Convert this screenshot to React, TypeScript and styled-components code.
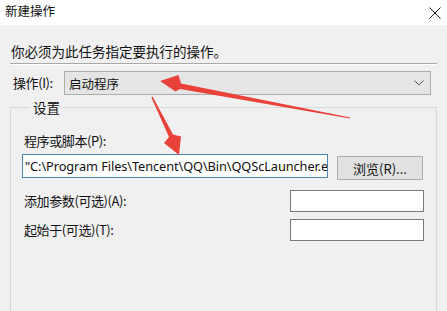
import React from "react";
import styled, { createGlobalStyle } from "styled-components";

const Global = createGlobalStyle`
  html, body { margin: 0; padding: 0; background: #f0f0f0; }
  body { font-family: "Noto Sans CJK SC", "Noto Sans", sans-serif; }
`;

const Window = styled.div`
  position: relative;
  width: 447px;
  height: 311px;
  overflow: hidden;
  background: #f0f0f0;
  display: flex;
  flex-direction: column;
  color: #111111;
`;

const TitleBar = styled.div`
  height: 25px;
  flex: none;
  background: #ffffff;
  display: flex;
  align-items: center;
  justify-content: space-between;
  padding: 0 5px 0 5px;
  font-size: 12.5px;
  line-height: 1;
`;

const Title = styled.span`
  margin-top: -2px;
`;

const Content = styled.div`
  display: flex;
  flex-direction: column;
  padding: 0 10px;
  flex: 1;
`;

const Instruction = styled.div`
  font-size: 13.5px;
  line-height: 16px;
  margin-top: 18px;
  padding-left: 1px;
`;

const Separator = styled.div`
  margin-top: 4px;
  height: 0;
  border-top: 1px solid #a9a9a9;
  border-bottom: 1px solid #ffffff;
`;

const ActionRow = styled.div`
  display: flex;
  align-items: center;
  margin-top: 6px;
`;

const Label = styled.span`
  font-size: 13px;
  line-height: 16px;
  white-space: nowrap;
  letter-spacing: -0.4px;
`;

const ActionLabel = styled(Label)`
  width: 51px;
  padding-left: 3px;
  flex: none;
`;

const Combo = styled.div`
  flex: 1;
  margin-right: 6px;
  height: 24px;
  box-sizing: border-box;
  background: #e5e5e5;
  border: 1px solid #adadad;
  display: flex;
  align-items: center;
  justify-content: space-between;
  padding: 0 6px 0 4px;
  font-size: 12.5px;
`;

const Group = styled.fieldset`
  margin: 5px 0 0 0;
  padding: 12px 13px 0 13px;
  border: 1px solid #d9d9d9;
  border-bottom: none;
  flex: 1;
  min-width: 0;
  display: flex;
  flex-direction: column;
`;

const Legend = styled.legend`
  font-size: 13.5px;
  line-height: 14px;
  padding: 0 3px;
  margin-left: 6px;
`;

const FieldLabel = styled(Label)`
  display: block;
  margin-top: 7px;
`;

const PathRow = styled.div`
  display: flex;
  align-items: flex-start;
  margin-top: 5px;
  margin-left: -2px;
`;

const PathInput = styled.div`
  width: 306px;
  height: 24px;
  box-sizing: border-box;
  border: 1px solid #4d86b3;
  background: #ffffff;
  font-family: "Noto Sans", "Open Sans", sans-serif;
  font-size: 12.8px;
  line-height: 22px;
  padding-left: 2px;
  white-space: nowrap;
  overflow: hidden;
  letter-spacing: -0.1px;
`;

const Button = styled.div`
  width: 86px;
  height: 24px;
  box-sizing: border-box;
  margin-top: 2px;
  margin-left: 9px;
  background: #e1e1e1;
  border: 1px solid #adadad;
  display: flex;
  align-items: center;
  justify-content: center;
  font-size: 13px;
`;

const FieldRow = styled.div<{ $gap: number }>`
  display: flex;
  align-items: center;
  justify-content: space-between;
  margin-top: ${(p) => p.$gap}px;
`;

const TextBox = styled.div`
  width: 134px;
  height: 22px;
  box-sizing: border-box;
  border: 1px solid #7a7a7a;
  background: #ffffff;
  margin-right: -1px;
`;

const Arrows = styled.svg`
  position: absolute;
  left: 0;
  top: 0;
  pointer-events: none;
`;

export default function App() {
  return (
    <>
      <Global />
      <Window>
        <TitleBar>
          <Title>新建操作</Title>
          <svg width="14" height="14" viewBox="0 0 14 14">
            <path d="M1.5 1.5 L12.5 12.5 M12.5 1.5 L1.5 12.5" stroke="#222" strokeWidth="1" fill="none" />
          </svg>
        </TitleBar>
        <Content>
          <Instruction>你必须为此任务指定要执行的操作。</Instruction>
          <Separator />
          <ActionRow>
            <ActionLabel>操作(I):</ActionLabel>
            <Combo>
              <span>启动程序</span>
              <svg width="10" height="6" viewBox="0 0 10 6">
                <path d="M0.5 0.5 L5 5 L9.5 0.5" stroke="#555" strokeWidth="1" fill="none" />
              </svg>
            </Combo>
          </ActionRow>
          <Group>
            <Legend>设置</Legend>
            <FieldLabel>程序或脚本(P):</FieldLabel>
            <PathRow>
              <PathInput>"C:\Program Files\Tencent\QQ\Bin\QQScLauncher.exe"</PathInput>
              <Button>浏览(R)...</Button>
            </PathRow>
            <FieldRow $gap={10}>
              <Label>添加参数(可选)(A):</Label>
              <TextBox />
            </FieldRow>
            <FieldRow $gap={7}>
              <Label>起始于(可选)(T):</Label>
              <TextBox />
            </FieldRow>
          </Group>
        </Content>
        <Arrows width="447" height="311" viewBox="0 0 447 311">
          <path
            d="M350.1 117.5 L181 83.5 L178.5 75 L160 81 L175.5 91.5 L180 89 L349.9 118.5 Z"
            fill="#e8423a"
          />
          <path
            d="M152.6 96.6 L173 134.5 L181 136.5 L179 155 L164 143 L169 137 L151.4 97.4 Z"
            fill="#e8423a"
          />
        </Arrows>
      </Window>
    </>
  );
}
